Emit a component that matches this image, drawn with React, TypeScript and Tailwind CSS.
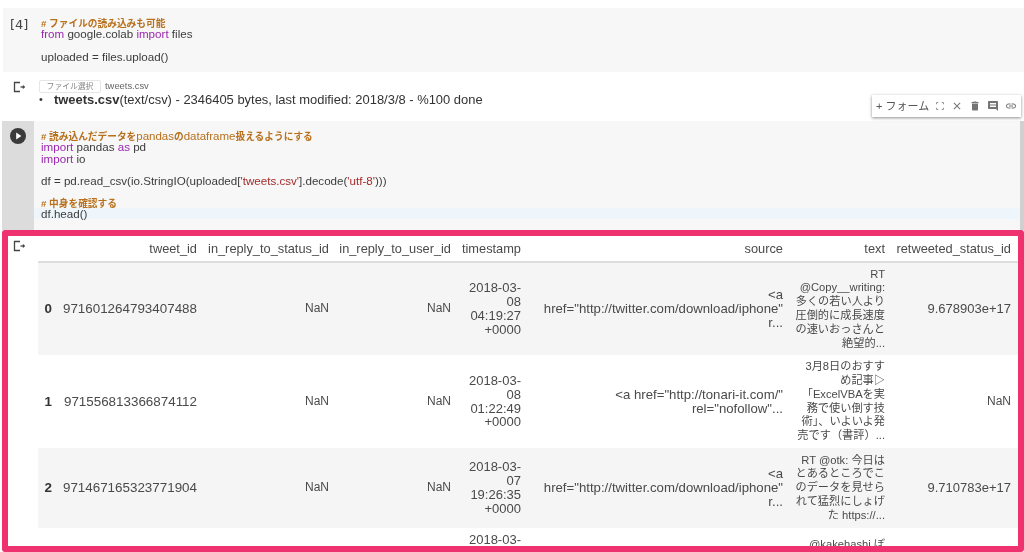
import React from 'react';

const SANS = '"Liberation Sans", "Noto Sans CJK JP", sans-serif';

const OutputIcon = () => (
  <svg width="14" height="14" viewBox="0 0 14 14" fill="none" stroke="#444" strokeWidth="1.3">
    <path d="M8 2.5H2.5v9H8" />
    <path d="M8.5 7h3" />
    <path d="M11 5.4 13 7l-2 1.6z" fill="#444" strokeWidth="0.5" />
  </svg>
);

const ToolIcon = ({ d, size = 12 }: { d: string; size?: number }) => (
  <svg width={size} height={size} viewBox="0 0 24 24" fill="#757575">
    <path d={d} />
  </svg>
);

const Comment = ({ children }: { children: React.ReactNode }) => (
  <div className="h-[10px] text-[#b8701c] text-[9.7px] font-bold whitespace-nowrap">{children}</div>
);
const Latin = ({ children }: { children: React.ReactNode }) => <span className="text-[11.5px] font-normal">{children}</span>;
const Kw = ({ children }: { children: React.ReactNode }) => <span className="text-[#9c27b0]">{children}</span>;
const Str = ({ children }: { children: React.ReactNode }) => <span className="text-[#a52a2a]">{children}</span>;

const rows = [
  {
    h: 'h-[93px]',
    alt: true,
    idx: '0',
    id: '971601264793407488',
    ts: '2018-03-08 04:19:27 +0000',
    source: '<a\nhref="http://twitter.com/download/iphone"\nr...',
    text: 'RT\n@Copy__writing:\n多くの若い人より\n圧倒的に成長速度\nの速いおっさんと\n絶望的...',
    rt: '9.678903e+17',
  },
  {
    h: 'h-[93px]',
    alt: false,
    idx: '1',
    id: '971556813366874112',
    ts: '2018-03-08 01:22:49 +0000',
    source: '<a href="http://tonari-it.com/"\nrel="nofollow"...',
    text: '3月8日のおすす\nめ記事▷\n「ExcelVBAを実\n務で使い倒す技\n術」、いよいよ発\n売です（書評）...',
    rt: 'NaN',
  },
  {
    h: 'h-[80px]',
    alt: true,
    idx: '2',
    id: '971467165323771904',
    ts: '2018-03-07 19:26:35 +0000',
    source: '<a\nhref="http://twitter.com/download/iphone"\nr...',
    text: 'RT @otk: 今日は\nとあるところでこ\nのデータを見せら\nれて猛烈にしょげ\nた https://...',
    rt: '9.710783e+17',
  },
];

export default function App() {
  return (
    <div className="w-[1024px] h-[552px] overflow-hidden bg-white flex flex-col pt-2 text-[#333] blur-[0.3px]" style={{ fontFamily: SANS }}>
      {/* first code cell */}
      <div className="ml-[3px] h-[64px] shrink-0 bg-[#f7f7f7] flex">
        <div className="w-[38px] shrink-0 pl-[7px] pt-[7px] text-[13px] text-[#444]" style={{ fontFamily: '"DejaVu Sans", sans-serif' }}>[4]</div>
        <div className="pt-[10px] text-[11.6px] leading-[11.5px] text-[#3c3c3c]">
          <Comment># ファイルの読み込みも可能</Comment>
          <div><Kw>from</Kw> google.colab <Kw>import</Kw> files</div>
          <div className="h-[11.5px]" />
          <div>uploaded = files.upload()</div>
        </div>
      </div>

      {/* upload output */}
      <div className="h-[49px] shrink-0 flex relative">
        <div className="w-[39px] shrink-0 pl-[12px] pt-2"><OutputIcon /></div>
        <div className="pt-2">
          <div className="flex items-center h-[13px] text-[9.4px] text-[#666]">
            <span className="border border-[#e6e6e6] rounded-[2px] w-[62px] h-[13px] text-center leading-[11px] text-[7.8px] text-[#888]">ファイル選択</span>
            <span className="ml-[4px]">tweets.csv</span>
          </div>
          <div className="flex items-center text-[12.95px] leading-[13px]">
            <span className="w-[15px] text-[11px]">•</span>
            <span><b className="font-bold">tweets.csv</b>(text/csv) - 2346405 bytes, last modified: 2018/3/8 - %100 done</span>
          </div>
        </div>
        <div className="absolute left-[872px] top-[23px] w-[149px] h-[22px] bg-white shadow-[0_1px_3px_rgba(0,0,0,0.45)] flex items-center pl-[4px] gap-[6px] text-[11px] text-[#555] z-10">
          <span className="whitespace-nowrap">+ フォーム</span>
          <ToolIcon d="M3 3h5v2H5v3H3zM16 3h5v5h-2V5h-3zM3 16h2v3h3v2H3zM19 16h2v5h-5v-2h3z" size={10} />
          <ToolIcon d="M19 6.41L17.59 5 12 10.59 6.41 5 5 6.41 10.59 12 5 17.59 6.41 19 12 13.41 17.59 19 19 17.59 13.41 12z" />
          <ToolIcon d="M6 19c0 1.1.9 2 2 2h8c1.1 0 2-.9 2-2V7H6v12zM19 4h-3.5l-1-1h-5l-1 1H5v2h14V4z" />
          <ToolIcon d="M20 2H4c-1.1 0-2 .9-2 2v12c0 1.1.9 2 2 2h14l4 4V4c0-1.1-.9-2-2-2zm-2 12H6v-2h12v2zm0-3H6V9h12v2zm0-3H6V6h12v2z" />
          <ToolIcon d="M3.9 12c0-1.71 1.39-3.1 3.1-3.1h4V7H7c-2.76 0-5 2.24-5 5s2.24 5 5 5h4v-1.9H7c-1.71 0-3.1-1.39-3.1-3.1zM8 13h8v-2H8v2zm9-6h-4v1.9h4c1.71 0 3.1 1.39 3.1 3.1s-1.39 3.1-3.1 3.1h-4V17h4c2.76 0 5-2.24 5-5s-2.24-5-5-5z" />
        </div>
      </div>

      {/* second code cell */}
      <div className="ml-[2px] h-[109px] shrink-0 flex bg-[#f7f7f7]">
        <div className="w-[32px] shrink-0 bg-[#dcdcdc] flex justify-center pt-[7px]">
          <svg width="16" height="16" viewBox="0 0 16 16">
            <circle cx="8" cy="8" r="8" fill="#3b3b3b" />
            <path d="M6.2 4.6 11.4 8l-5.2 3.4z" fill="#fff" />
          </svg>
        </div>
        <div className="flex-1 pt-[10px] text-[11.6px] leading-[11.5px] text-[#3c3c3c]">
          <div className="pl-[7px]"><Comment># 読み込んだデータを<Latin>pandas</Latin>の<Latin>dataframe</Latin>扱えるようにする</Comment></div>
          <div className="pl-[7px]"><Kw>import</Kw> pandas <Kw>as</Kw> pd</div>
          <div className="pl-[7px]"><Kw>import</Kw> io</div>
          <div className="h-[10.5px]" />
          <div className="pl-[7px]">df = pd.read_csv(io.StringIO(uploaded[<Str>'tweets.csv'</Str>].decode(<Str>'utf-8'</Str>)))</div>
          <div className="h-[11.5px]" />
          <div className="pl-[7px]"><Comment># 中身を確認する</Comment></div>
          <div className="pl-[7px] bg-[#eef6fc]">df.head()</div>
        </div>
        <div className="w-[4px] shrink-0 bg-[#d0d0d0]" />
      </div>

      {/* dataframe output, framed */}
      <div className="ml-[2px] h-[322px] shrink-0 border-[6px] border-[#ee3270] rounded-[3px] bg-white flex overflow-hidden">
        <div className="w-[30px] shrink-0 pl-[4px] pt-[3px]"><OutputIcon /></div>
        <table className="table-fixed border-collapse w-[980px] h-fit text-[13.4px] leading-[13.8px] text-right text-[#4a4a4a]">
          <colgroup>
            <col className="w-[20px]" />
            <col className="w-[144px]" />
            <col className="w-[132px]" />
            <col className="w-[122px]" />
            <col className="w-[70px]" />
            <col className="w-[262px]" />
            <col className="w-[102px]" />
            <col className="w-[128px]" />
          </colgroup>
          <thead>
            <tr className="h-[26px] border-b-2 border-[#dddddd] text-[12.8px]">
              <th />
              {['tweet_id', 'in_reply_to_status_id', 'in_reply_to_user_id', 'timestamp', 'source', 'text'].map((c) => (
                <th key={c} className="font-normal pr-[5px] whitespace-nowrap">{c}</th>
              ))}
              <th className="font-normal pr-[7px] whitespace-nowrap">retweeted_status_id</th>
            </tr>
          </thead>
          <tbody>
            {rows.map((r) => (
              <tr key={r.idx} className={`${r.h} ${r.alt ? 'bg-[#f5f5f5]' : 'bg-white'}`}>
                <th className="font-bold pr-[6px] text-[#333]">{r.idx}</th>
                <td className="pr-[5px]">{r.id}</td>
                <td className="pr-[5px] text-[12px]">NaN</td>
                <td className="pr-[5px] text-[12px]">NaN</td>
                <td className="pr-[5px] pl-[5px] text-[13px]">{r.ts}</td>
                <td className="pr-[5px] whitespace-pre text-[13.2px]">{r.source}</td>
                <td className="pr-[5px] whitespace-pre text-[11.2px]">{r.text}</td>
                <td className={`pr-[7px] ${r.rt === 'NaN' ? 'text-[12px]' : 'text-[13px]'}`}>{r.rt}</td>
              </tr>
            ))}
            <tr className="h-[60px]">
              <th />
              <td />
              <td />
              <td />
              <td className="pr-[5px] pl-[5px] align-top pt-[5px] text-[13px]">2018-03-</td>
              <td />
              <td className="pr-[5px] align-top pt-[10px] text-[11.2px] whitespace-pre">@kakehashi ぼ</td>
              <td />
            </tr>
          </tbody>
        </table>
      </div>
    </div>
  );
}
